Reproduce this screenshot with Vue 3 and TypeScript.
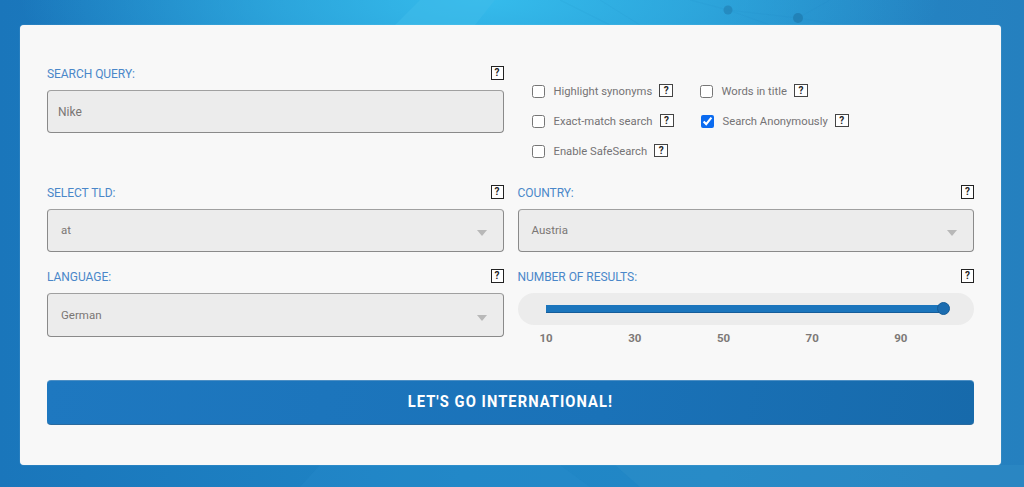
<script setup lang="ts">
const ticks = ['10', '30', '50', '70', '90']
</script>

<template>
  <div class="page">
    <svg class="bg" viewBox="0 0 1024 487" width="1024" height="487" aria-hidden="true">
      <polygon points="395,25 420,0 495,0 475,25" fill="#3fbcea" opacity="0.55" />
      <g stroke="#1f7fba" stroke-width="0.6" opacity="0.16" fill="none">
        <path d="M728 10 L798 18 M728 10 L690 0 M798 18 L830 0 M728 10 L770 25 M798 18 L840 25 M560 0 L610 25 M600 0 L640 25" />
      </g>
      <circle cx="728" cy="10" r="4.5" fill="#2384b8" opacity="0.75" />
      <circle cx="798" cy="18" r="5" fill="#1f7db2" opacity="0.8" />
      <polygon points="300,487 320,465 560,465 590,487" fill="#2a8fcf" opacity="0.25" />
      <polygon points="640,487 615,465 1024,465 1024,487" fill="#3b96cc" opacity="0.25" />
    </svg>

    <main class="card">
      <section class="row top">
        <div class="field">
          <div class="label-row"><label>SEARCH QUERY:</label><span class="help">?</span></div>
          <div class="control query">Nike</div>
        </div>
        <div class="options">
          <div class="opt-col first">
            <label class="opt"><input type="checkbox" /><span>Highlight synonyms</span><span class="help">?</span></label>
            <label class="opt"><input type="checkbox" /><span>Exact-match search</span><span class="help">?</span></label>
            <label class="opt last"><input type="checkbox" /><span>Enable SafeSearch</span><span class="help">?</span></label>
          </div>
          <div class="opt-col">
            <label class="opt"><input type="checkbox" /><span>Words in title</span><span class="help">?</span></label>
            <label class="opt nudge"><input type="checkbox" checked /><span>Search Anonymously</span><span class="help">?</span></label>
          </div>
        </div>
      </section>

      <section class="row second">
        <div class="field">
          <div class="label-row"><label>SELECT TLD:</label><span class="help">?</span></div>
          <div class="control select"><span>at</span><i class="caret"></i></div>
        </div>
        <div class="field">
          <div class="label-row"><label>COUNTRY:</label><span class="help">?</span></div>
          <div class="control select"><span>Austria</span><i class="caret"></i></div>
        </div>
      </section>

      <section class="row third">
        <div class="field">
          <div class="label-row"><label>LANGUAGE:</label><span class="help">?</span></div>
          <div class="control select"><span>German</span><i class="caret"></i></div>
        </div>
        <div class="field">
          <div class="label-row"><label>NUMBER OF RESULTS:</label><span class="help">?</span></div>
          <div class="slider">
            <div class="track"><i class="thumb"></i></div>
          </div>
          <div class="ticks"><span v-for="t in ticks" :key="t">{{ t }}</span></div>
        </div>
      </section>

      <button class="go" type="button"><span>LET'S GO INTERNATIONAL!</span></button>
    </main>
  </div>
</template>

<style>
html, body { margin: 0; padding: 0; }
</style>

<style scoped>
.page {
  position: relative;
  width: 1024px;
  height: 487px;
  overflow: hidden;
  box-sizing: border-box;
  padding: 25px 23px 22px 20px;
  font-family: Roboto, "Liberation Sans", sans-serif;
  background:
    radial-gradient(ellipse 460px 130px at 480px 0, #35bcec 0%, rgba(53, 188, 236, 0.6) 45%, rgba(53, 188, 236, 0) 100%),
    linear-gradient(90deg, #1a76bb 0%, #1f86c6 45%, #2287c6 70%, #2580bf 100%);
}
.bg { position: absolute; left: 0; top: 0; }
.card {
  position: relative;
  height: 440px;
  box-sizing: border-box;
  padding: 41px 27px 0;
  background: #f8f8f8;
  border-radius: 4px;
  box-shadow: 0 0 1px rgba(255, 255, 255, 0.6);
}
.row {
  display: grid;
  grid-template-columns: 456.5px 456.5px;
  column-gap: 14px;
}
.top { height: 119px; }
.second { height: 84px; }
.third { height: 111px; }
.label-row {
  display: flex;
  justify-content: space-between;
  align-items: flex-start;
  height: 24px;
}
.label-row label {
  font-size: 12px;
  line-height: 16px;
  color: #4a87c9;
  letter-spacing: -0.05px;
}
.help {
  box-sizing: border-box;
  display: inline-block;
  width: 13px;
  height: 14px;
  border: 1px solid #222;
  background: #fff;
  color: #222;
  font-size: 10px;
  font-weight: 700;
  line-height: 12px;
  text-align: center;
}
.control {
  box-sizing: border-box;
  height: 43px;
  display: flex;
  align-items: center;
  padding: 0 10px;
  background: #ececec;
  border: 1px solid #8a8a8a;
  border-top-color: #a0a0a0;
  border-radius: 4px;
  font-size: 11.5px;
  color: #7a7674;
}
.query { font-size: 12px; }
.select {
  justify-content: space-between;
  padding: 0 16px 0 13px;
}
.select span { margin-top: -1px; }
.third .control { height: 44px; }
.caret {
  width: 0;
  height: 0;
  margin-top: 5px;
  border-left: 5.5px solid transparent;
  border-right: 5.5px solid transparent;
  border-top: 6px solid #b8b8b8;
}
.options {
  display: flex;
  padding: 11px 0 0 14px;
}
.opt-col { display: flex; flex-direction: column; }
.opt-col.first { width: 168px; }
.opt {
  display: flex;
  align-items: center;
  height: 29.5px;
  font-size: 11.25px;
  color: #757375;
}
.opt.last { margin-top: 1px; }
.opt input {
  width: 13px;
  height: 13px;
  margin: 0 9px 0 0;
  accent-color: #0b6bf0;
}
.opt.nudge input { margin-left: 1px; }
.opt span:not(.help) { margin-right: 7px; }
.opt .help {
  width: 14px;
  height: 13px;
  line-height: 11px;
  border-color: #444;
  margin-top: -2px;
}
.slider {
  box-sizing: border-box;
  height: 32px;
  padding: 12px 30px 0 28px;
  background: #ececec;
  border-radius: 16px;
}
.track {
  position: relative;
  height: 8px;
  background: #1b75bc;
  border-bottom: 1px solid #155c99;
  box-sizing: border-box;
}
.thumb {
  position: absolute;
  right: -6px;
  top: -3px;
  width: 13px;
  height: 13px;
  box-sizing: border-box;
  border-radius: 50%;
  background: #1b6cb0;
  border: 1px solid #145c98;
}
.ticks {
  display: grid;
  grid-template-columns: repeat(5, 88.7px);
  margin-top: 6px;
  padding-left: 22px;
  font-size: 11.5px;
  font-weight: 700;
  line-height: 14px;
  color: #7d7977;
}
.ticks span { width: 14px; text-align: left; }
.go {
  display: block;
  width: 100%;
  height: 45px;
  padding: 0 0 3px;
  border: 0;
  border-top: 1px solid #4d8fc4;
  border-bottom: 1px solid #2a6a9e;
  border-radius: 4px;
  background: linear-gradient(100deg, #1e78c0 0%, #1a72b8 60%, #176aab 100%);
  color: #fff;
  font-family: Roboto, "Liberation Sans", sans-serif;
  font-size: 16.5px;
  font-weight: 700;
  letter-spacing: 1.2px;
  cursor: pointer;
}
.go span {
  display: inline-block;
  transform: scaleX(0.89);
  white-space: nowrap;
}
</style>
